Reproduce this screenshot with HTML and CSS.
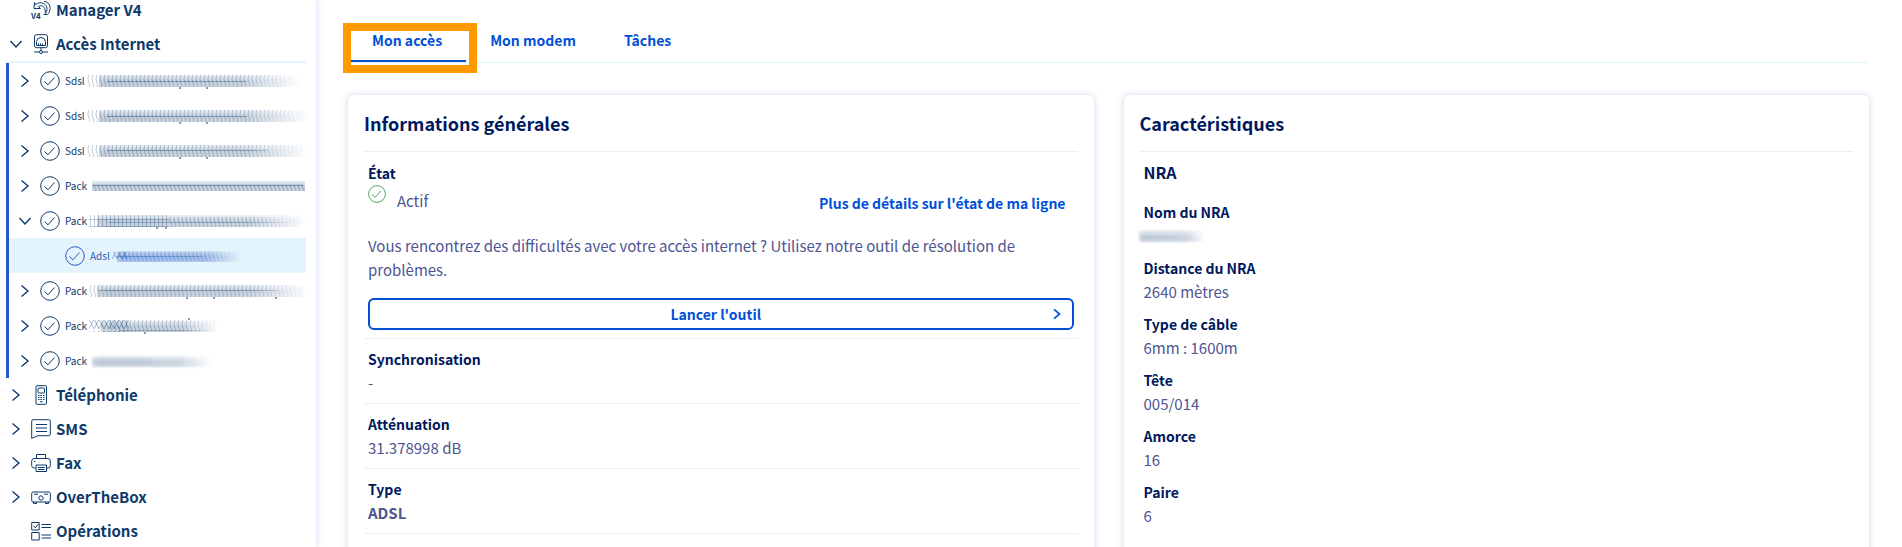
FILE: index.html
```html
<!DOCTYPE html>
<html lang="fr">
<head>
<meta charset="utf-8">
<title>Accès Internet</title>
<link rel="stylesheet" href="styles.css">
</head>
<body>
<svg class="defs" aria-hidden="true">
  <defs>
    <linearGradient id="fade"><stop offset="0" stop-color="#fff" stop-opacity=".75"/><stop offset=".08" stop-color="#fff"/><stop offset=".72" stop-color="#fff" stop-opacity=".9"/><stop offset="1" stop-color="#fff" stop-opacity="0"/></linearGradient>
    <linearGradient id="band" x1="0" y1="0" x2="0" y2="1"><stop offset="0" stop-color="currentColor" stop-opacity=".08"/><stop offset=".5" stop-color="currentColor" stop-opacity=".25"/><stop offset="1" stop-color="currentColor" stop-opacity=".22"/></linearGradient>
    <linearGradient id="band-blue" class="blue" x1="0" y1="0" x2="0" y2="1"><stop offset="0" stop-color="currentColor" stop-opacity=".15"/><stop offset=".5" stop-color="currentColor" stop-opacity=".4"/><stop offset="1" stop-color="currentColor" stop-opacity=".3"/></linearGradient>
    <mask id="fade-mask" maskContentUnits="objectBoundingBox"><rect width="1" height="1" fill="url(#fade)" stroke="none"/></mask>
    <pattern id="coil" width="4" height="12" patternUnits="userSpaceOnUse"><path d="M3 0Q-1 6 3 12" fill="none" stroke="currentColor" stroke-opacity=".3"/></pattern>
    <pattern id="coil-blue" class="blue" width="4" height="12" patternUnits="userSpaceOnUse"><path d="M3 0Q-1 6 3 12" fill="none" stroke="currentColor" stroke-opacity=".4"/></pattern>
    <pattern id="cross" width="5" height="12" patternUnits="userSpaceOnUse"><path d="M0 1 5 11M5 1 0 11" fill="none" stroke="currentColor" stroke-opacity=".4"/></pattern>
    <pattern id="cross-blue" class="blue" width="5" height="12" patternUnits="userSpaceOnUse"><path d="M0 1 5 11M5 1 0 11" fill="none" stroke="currentColor" stroke-opacity=".6"/></pattern>
    <pattern id="grid" width="4" height="12" patternUnits="userSpaceOnUse"><path d="M1.500 0V12M0 6.500H4M0 1.500H4" fill="none" stroke="currentColor" stroke-opacity=".3"/></pattern>
    <symbol id="check" viewBox="0 0 20 20"><circle cx="10" cy="10" r="9.300"/><path d="m4.500 10.500 3.500 3.300 6.500-7.300"/></symbol>
    <symbol id="right" viewBox="0 0 12 14"><path d="m2.500 1.500 6.500 5.500-6.500 5.500"/></symbol>
    <symbol id="down" viewBox="0 0 14 12"><path d="m1.500 3 5.500 6 5.500-6"/></symbol>
  </defs>
</svg>
<div class="app">
  <nav class="sidebar" aria-label="Services">
    <ul class="tree">
      <li>
        <div class="row"><span class="toggle"></span><a class="entry" href="#">
          <svg class="icon" viewBox="0 0 20 20"><path d="M3.500 2.500 3 8.500h6.500L7.500 6.500c3-2 6 0 6.500 3l.5 4c2-2 2.500-8-2-10-3-1.500-5.500-.8-8 1.200zM13 1.500c6.500 0 8 9 3.500 13h-4"/><text class="icon-text" x="0" y="18.500">V4</text></svg>
          Manager V4</a></div>
      </li>
      <li>
        <div class="row"><button class="toggle" aria-label="Replier Accès Internet" aria-expanded="true"><svg class="chevron-down"><use href="#down"/></svg></button><a class="entry" href="#">
          <svg class="icon" viewBox="0 0 20 20"><rect x="3.500" y=".7" width="13" height="13" rx="2"/><path d="M5.500 11.500V7.500Q6 3.500 10 3.500T14.500 7.500v4zM7.500 9.500v2M9.500 9.500v2M11.500 9.500v2M10 13.700v2.500M3 18h5M12 18h5"/><circle cx="10" cy="18" r="1.500"/></svg>
          Accès Internet</a></div>
        <ul class="subtree">
          <li class="row"><button class="toggle" aria-label="Déplier"><svg class="chevron"><use href="#right"/></svg></button><a class="access" href="#"><svg class="icon"><use href="#check"/></svg><span>Sdsl</span><svg class="smudge" width="214" height="16" aria-hidden="true"><g mask="url(#fade-mask)"><rect x="12" y="2" width="200" height="12" fill="url(#band)"/><rect y="2" width="214" height="12" fill="url(#coil)"/><path d="M20 8.500H160" stroke-opacity=".4"/></g><path class="dots" d="M93 14v2M120 14v2"/></svg></a></li>
          <li class="row"><button class="toggle" aria-label="Déplier"><svg class="chevron"><use href="#right"/></svg></button><a class="access" href="#"><svg class="icon"><use href="#check"/></svg><span>Sdsl</span><svg class="smudge" width="222" height="16" aria-hidden="true"><g mask="url(#fade-mask)"><rect x="12" y="2" width="206" height="12" fill="url(#band)"/><rect y="2" width="222" height="12" fill="url(#coil)"/><path d="M20 8.500H160" stroke-opacity=".4"/></g><path class="dots" d="M93 14v2M120 14v2"/></svg></a></li>
          <li class="row"><button class="toggle" aria-label="Déplier"><svg class="chevron"><use href="#right"/></svg></button><a class="access" href="#"><svg class="icon"><use href="#check"/></svg><span>Sdsl</span><svg class="smudge" width="222" height="16" aria-hidden="true"><g mask="url(#fade-mask)"><rect x="12" y="2" width="206" height="12" fill="url(#band)"/><rect y="2" width="222" height="12" fill="url(#coil)"/><path d="M20 7.500H180" stroke-opacity=".4"/></g><path class="dots" d="M93 14v2M120 14v2"/></svg></a></li>
          <li class="row"><button class="toggle" aria-label="Déplier"><svg class="chevron"><use href="#right"/></svg></button><a class="access" href="#"><svg class="icon"><use href="#check"/></svg><span>Pack</span><svg class="smudge" width="216" height="16" aria-hidden="true"><rect x="3" y="3" width="213" height="10" fill="url(#band)"/><rect x="3" y="6" width="213" height="7" fill="url(#coil)"/><path d="M4 7.500H214" stroke-opacity=".4"/></svg></a></li>
          <li>
            <div class="row"><button class="toggle" aria-label="Replier" aria-expanded="true"><svg class="chevron-down"><use href="#down"/></svg></button><a class="access" href="#"><svg class="icon"><use href="#check"/></svg><span>Pack</span><svg class="smudge" width="220" height="16" aria-hidden="true"><g mask="url(#fade-mask)"><rect x="8" y="2" width="204" height="12" fill="url(#band)"/><rect y="2" width="80" height="12" fill="url(#grid)"/><rect x="80" y="4" width="140" height="10" fill="url(#coil)"/><path d="M20 9.500H200" stroke-opacity=".3"/></g><path class="dots" d="M68 14v2M77 14v2"/></svg></a></div>
            <ul class="leaves">
              <li class="row selected"><a class="access" href="#" aria-current="page"><svg class="icon"><use href="#check"/></svg><span>Adsl</span><svg class="smudge" width="132" height="16" aria-hidden="true"><g mask="url(#fade-mask)"><rect x="5" y="3" width="125" height="11" fill="url(#band-blue)"/><rect y="4" width="15" height="9" fill="url(#cross-blue)"/><rect x="10" y="4" width="120" height="9" fill="url(#coil-blue)"/><path d="M4 8.500H90" stroke-opacity=".4"/></g></svg></a></li>
            </ul>
          </li>
          <li class="row"><button class="toggle" aria-label="Déplier"><svg class="chevron"><use href="#right"/></svg></button><a class="access" href="#"><svg class="icon"><use href="#check"/></svg><span>Pack</span><svg class="smudge" width="222" height="16" aria-hidden="true"><g mask="url(#fade-mask)"><rect x="8" y="2" width="206" height="12" fill="url(#band)"/><rect y="2" width="222" height="12" fill="url(#coil)"/><path d="M10 7.500H190" stroke-opacity=".4"/></g><path class="dots" d="M98 14v2M125 14v2M187 14v2"/></svg></a></li>
          <li class="row"><button class="toggle" aria-label="Déplier"><svg class="chevron"><use href="#right"/></svg></button><a class="access" href="#"><svg class="icon"><use href="#check"/></svg><span>Pack</span><svg class="smudge" width="132" height="16" aria-hidden="true"><g mask="url(#fade-mask)"><rect x="12" y="3" width="116" height="11" fill="url(#band)"/><rect y="2" width="40" height="12" fill="url(#cross)"/><rect x="20" y="2" width="110" height="12" fill="url(#coil)"/><path d="M30 12.500H120" stroke-opacity=".3"/></g><path class="dots" d="M56 14v2M100 0v2"/></svg></a></li>
          <li class="row"><button class="toggle" aria-label="Déplier"><svg class="chevron"><use href="#right"/></svg></button><a class="access" href="#"><svg class="icon"><use href="#check"/></svg><span>Pack</span><svg class="smudge soft" width="126" height="16" aria-hidden="true"><g mask="url(#fade-mask)"><rect x="3" y="3" width="120" height="11" fill="url(#band)"/><rect x="3" y="4" width="60" height="8" fill="url(#coil)" opacity=".6"/></g></svg></a></li>
        </ul>
      </li>
      <li class="row"><button class="toggle" aria-label="Déplier Téléphonie"><svg class="chevron"><use href="#right"/></svg></button><a class="entry" href="#">
        <svg class="icon" viewBox="0 0 20 20"><rect x="5" y=".7" width="10.500" height="18.600" rx="1"/><rect x="7" y="3" width="6.500" height="5" rx="1"/><path d="M7 10.500h1.500M9.500 10.500H11M12 10.500h1.500M7 12.500h1.500M9.500 12.500H11M12 12.500h1.500M7 14.500h1.500M9.500 14.500H11M12 14.500h1.500M9 16.700h2.500"/></svg>
        Téléphonie</a></li>
      <li class="row"><button class="toggle" aria-label="Déplier SMS"><svg class="chevron"><use href="#right"/></svg></button><a class="entry" href="#">
        <svg class="icon" viewBox="0 0 20 20"><path d="M.7 19.300V2.200Q.7.700 2.200.7h15.600q1.500 0 1.500 1.500v13q0 1.500-1.500 1.500H7zM5 5.500h11M5 9h11M5 12.500h11"/></svg>
        SMS</a></li>
      <li class="row"><button class="toggle" aria-label="Déplier Fax"><svg class="chevron"><use href="#right"/></svg></button><a class="entry" href="#">
        <svg class="icon" viewBox="0 0 20 20"><path d="M5.500 5.500v-4h9v4M4.500 15H3Q.7 15 .7 12.500V8Q.7 5.500 3 5.500h14q2.300 0 2.300 2.500v4.500Q19.300 15 17 15h-1.500M5 12h10.500v6.500H5zM7 14.500h6.500M7 16.500h6.500M3 8.500h1.500"/></svg>
        Fax</a></li>
      <li class="row"><button class="toggle" aria-label="Déplier OverTheBox"><svg class="chevron"><use href="#right"/></svg></button><a class="entry" href="#">
        <svg class="icon" viewBox="0 0 20 20"><path d="M1.500 5h17l.8 1.500v7l-.8 1.500h-17L.7 13.500v-7zM3 7.200h4M13 7.200h4M2.500 15v1.500h3V15M14.500 15v1.500h3V15"/><circle cx="10" cy="11" r="2.200"/></svg>
        OverTheBox</a></li>
      <li class="row"><span class="toggle"></span><a class="entry" href="#">
        <svg class="icon" viewBox="0 0 20 20"><path d="M.7 1.500h7.500V9H.7zM.7 11.500h7.500V19H.7zM2.500 4.800l1.800 2L7.500 3M10.500 3.500h9.500M10.500 6.500h9.500M10.500 14h9.500M10.500 17h9.500"/></svg>
        Opérations</a></li>
    </ul>
  </nav>
  <main class="content">
    <nav class="tabs" aria-label="Sections">
      <a class="tab active" href="#" aria-current="page">Mon accès</a>
      <a class="tab" href="#">Mon modem</a>
      <a class="tab" href="#">Tâches</a>
    </nav>
    <div class="cards">
      <section class="card">
        <h2>Informations générales</h2>
        <div class="status">
          <dl>
            <dt>État</dt>
            <dd class="state"><svg class="ok"><use href="#check"/></svg><span>Actif</span></dd>
          </dl>
          <a class="details" href="#">Plus de détails sur l'état de ma ligne</a>
        </div>
        <div class="help">
          <p>Vous rencontrez des difficultés avec votre accès internet ? Utilisez notre outil de résolution de problèmes.</p>
          <button class="launch"><span>Lancer l'outil</span><svg class="go"><use href="#right"/></svg></button>
        </div>
        <dl class="facts">
          <div class="fact"><dt>Synchronisation</dt><dd>-</dd></div>
          <div class="fact"><dt>Atténuation</dt><dd>31.378998 dB</dd></div>
          <div class="fact"><dt>Type</dt><dd class="strong">ADSL</dd></div>
        </dl>
      </section>
      <section class="card">
        <h2>Caractéristiques</h2>
        <div class="specs">
          <h3>NRA</h3>
          <dl class="spec-list">
            <div><dt>Nom du NRA</dt><dd class="masked"><svg class="smudge blot" width="70" height="13" aria-hidden="true"><g mask="url(#fade-mask)"><rect x="1" y="1" width="66" height="11" rx="3" fill="url(#band)"/><path d="M0 1.500H66M4 6.500H40" stroke-opacity=".25"/></g></svg></dd></div>
            <div><dt>Distance du NRA</dt><dd>2640 mètres</dd></div>
            <div><dt>Type de câble</dt><dd>6mm : 1600m</dd></div>
            <div><dt>Tête</dt><dd>005/014</dd></div>
            <div><dt>Amorce</dt><dd>16</dd></div>
            <div><dt>Paire</dt><dd>6</dd></div>
          </dl>
        </div>
      </section>
    </div>
  </main>
</div>
</body>
</html>
```
FILE: styles.css
```css
* { box-sizing: border-box; }
body {
  margin: 0;
  background: #fff;
  color: #4d5592;
  font-family: "Noto Sans CJK JP", "Noto Sans", sans-serif;
  font-size: 15px;
  line-height: 24px;
}
ul, dl, dd, h2, h3, p { margin: 0; padding: 0; }
ul { list-style: none; }
a { text-decoration: none; }
button { font: inherit; background: none; border: 0; padding: 0; cursor: pointer; }
svg { flex: none; fill: none; stroke: currentColor; }
.defs { position: absolute; width: 0; height: 0; color: #0e3a6b; }
.blue { color: #2859c0; }

.app { display: flex; height: 100vh; overflow: hidden; }

.sidebar {
  flex: none;
  width: 316px;
  padding: 0 10px 0 6px;
  color: #0e3a6b;
  box-shadow: 0 0 6px 1px #dedff5;
}
.tree { margin-top: -7px; }
.row { display: flex; align-items: center; height: 34px; }
.toggle { display: flex; flex: none; justify-content: center; width: 20px; margin-right: 5px; color: inherit; }
.entry, .access { display: flex; align-items: center; color: inherit; white-space: nowrap; }
.entry { gap: 5px; font-weight: 700; }
.icon { width: 20px; height: 20px; }
.icon-text { font-size: 8px; font-weight: 700; fill: currentColor; stroke: none; }
.chevron { width: 12px; height: 14px; stroke-width: 1.4; }
.chevron-down { width: 14px; height: 12px; stroke-width: 1.4; }

.subtree { border-top: 2px solid #e4f4fd; }
.subtree .row { height: 35px; padding-left: 6px; border-left: 3px solid #2859c0; }
.access { gap: 5px; font-size: 10px; }
.subtree .leaves .row { padding-left: 56px; }
.leaves .selected { background: #e4f4fc; color: #2859c0; }
.smudge { overflow: visible; margin-left: -3px; }
.smudge rect { stroke: none; }
.soft { filter: blur(1px); }

.content { flex: 1; min-width: 0; padding: 16px 33px 0 32px; }
.tabs { display: flex; border-bottom: 1px solid #dff4fb; }
.tab { position: relative; padding: 12px 24px 8px; margin-bottom: 2px; color: #0050d7; font-size: 14px; font-weight: 700; }
.active { border-bottom: 2px solid #0050d7; margin-bottom: 0; }
.active::after { content: ""; position: absolute; inset: 7px -11px -13px -5px; border: 8px solid #ff9a00; }

.cards { display: grid; grid-template-columns: 1fr 1fr; gap: 30px; margin-top: 32px; }
.card { height: 100vh; padding: 16px; border-radius: 6px; box-shadow: 0 0 6px 1px #dedff5; }
h2 { padding-bottom: 16px; border-bottom: 1px solid #eeeef0; color: #00185e; font-size: 18px; line-height: 24px; }
dt { color: #00185e; font-size: 14px; font-weight: 700; }
.facts { border-bottom: 1px solid #eeeef0; }
.fact { padding: 8px 4px; border-top: 1px solid #eeeef0; }
.status { display: flex; align-items: flex-end; justify-content: space-between; padding: 9px 4px 5px; }
.state { display: flex; gap: 11px; padding-bottom: 2px; }
.state span { padding-top: 4px; }
.ok { width: 18px; height: 18px; color: #37a34a; }
.details { padding-right: 8px; color: #0050d7; font-size: 14px; font-weight: 700; }
.help { padding: 14px 4px 8px; }
.launch {
  display: flex;
  align-items: center;
  width: 100%;
  height: 32px;
  margin-top: 16px;
  padding: 0 10px;
  border: 2px solid #0050d7;
  border-radius: 6px;
  color: #0050d7;
  font-size: 14px;
  font-weight: 700;
}
.launch span { flex: 1; }
.go { width: 10px; height: 12px; stroke-width: 2; }
.strong { font-weight: 700; }

.specs { padding: 8px 4px; }
h3 { color: #00185e; font-size: 16px; line-height: 24px; margin-bottom: 16px; }
.spec-list { display: grid; gap: 8px; }
.masked { display: flex; align-items: center; height: 24px; margin-left: -3px; color: #6f73a8; }
.blot { filter: blur(1px); }
```
